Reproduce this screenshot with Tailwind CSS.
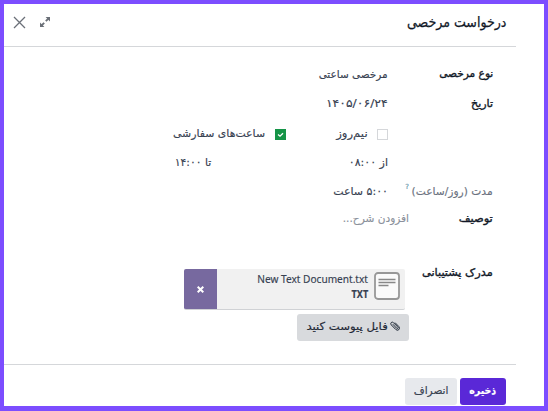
<!DOCTYPE html>
<html lang="fa" dir="rtl">
<head>
<meta charset="utf-8">
<title>درخواست مرخصی</title>
<script src="https://cdn.jsdelivr.net/npm/@tailwindcss/browser@4"></script>
</head>
<body class="font-['DejaVu_Sans',sans-serif] text-[11px] leading-none text-[#374151] [-webkit-text-stroke:0.15px_currentColor]">
<div class="w-[548px] h-[411px] border-4 border-b-[5px] border-[#7c4dff] bg-white flex flex-col overflow-hidden whitespace-nowrap">
  <header class="h-[43px] shrink-0 ms-7 border-b border-[#d5d7da] flex items-center justify-between ps-[10px] pe-[9px]">
    <h1 class="text-[14px] text-[#111827] -mt-[6px] [-webkit-text-stroke:0.25px_currentColor]"><span class="inline-block origin-right scale-x-[.9]">درخواست مرخصی</span></h1>
    <div class="flex items-center gap-[13px] -mt-[6px]">
      <svg class="size-[12px]" viewBox="0 0 12 12" fill="#6b7078" stroke="#6b7078"><path d="M6.6 1H11v4.4zM1 6.6V11h4.4z" stroke="none"/><path d="M9.5 2.5 6.8 5.2M5.2 6.8 2.5 9.5" stroke-width="1.8" fill="none"/></svg>
      <svg class="size-[13px]" viewBox="0 0 13 13" fill="none" stroke="#6b7078" stroke-width="1.3"><path d="M1 1l11 11M12 1 1 12"/></svg>
    </div>
  </header>
  <main class="pt-3 ps-[51px] h-[317px] shrink-0">
    <div class="h-[30px] flex items-center"><div class="w-[105px] -mt-[2px] text-[#111827] [-webkit-text-stroke:0.35px_currentColor]"><span class="inline-block origin-right scale-x-[.96]">نوع مرخصی</span></div><span class="inline-block origin-right scale-x-[.95]">مرخصی ساعتی</span></div>
    <div class="h-[29px] flex items-center"><div class="w-[105px] -mt-px text-[#111827] [-webkit-text-stroke:0.35px_currentColor]"><span class="inline-block">تاریخ</span></div><span dir="ltr" class="inline-block origin-right scale-x-[1.13]">۱۴۰۵/۰۶/۲۴</span></div>
    <div class="h-[30px] flex items-center ps-[105px]">
      <div class="w-[102px] flex items-center gap-[9px]"><i class="size-[11px] border border-[#d5d7da] mt-[2px]"></i><span class="inline-block origin-right scale-x-[1.06]">نیم‌روز</span></div>
      <div class="flex items-center gap-[10px]"><i class="size-[11px] bg-[#159447] mt-[2px]"><svg viewBox="0 0 11 11" fill="none" stroke="white" stroke-width="1.3"><path d="M3 5.5 5 7.2 8 4.2"/></svg></i><span class="inline-block origin-right scale-x-[.99]">ساعت‌های سفارشی</span></div>
    </div>
    <div class="h-[29px] flex items-center ps-[105px]"><div class="w-[177px]"><span class="inline-block">از ۰۸:۰۰</span></div><span class="inline-block origin-right scale-x-[.98]">تا ۱۴:۰۰</span></div>
    <div class="h-[29px] flex items-center"><div class="w-[105px] text-[#6b7280] flex items-start"><span class="w-[84px]"><span class="inline-block origin-right scale-x-[.97]">مدت (روز/ساعت)</span></span><sup class="text-[7px] leading-none top-0 -mt-[2px] text-[#5b93a8]">?</sup></div><span class="inline-block">۵:۰۰ ساعت</span></div>
    <div class="h-[26px] flex items-center"><div class="w-[84px] -mt-px text-[#111827] [-webkit-text-stroke:0.35px_currentColor]"><span class="inline-block origin-right scale-x-[1.04]">توصیف</span></div><span class="inline-block -mt-px origin-right scale-x-[.96] text-[#8b919b]">افزودن شرح...</span></div>
    <div class="mt-[37px] flex">
      <div class="w-[84px] -mt-[2px] text-[#111827] [-webkit-text-stroke:0.35px_currentColor]"><span class="inline-block origin-right scale-x-[1.03]">مدرک پشتیبانی</span></div>
      <div>
        <div class="w-[221px] h-[41px] ms-1 rounded-xs overflow-hidden border-b border-[#d0d2d5] bg-[#f1f1f1] flex">
          <svg class="w-[27px] h-[30px] ms-[4px] mt-[3px]" viewBox="0 0 27 30"><rect x="1" y="1" width="24" height="26" rx="3" fill="#fafafa" stroke="#979797" stroke-width="1.8"/><path d="M4.5 7.5h17M4.5 10.5h17M4.5 13.5h10" stroke="#888" stroke-width="1.3"/></svg>
          <div dir="ltr" class="w-[157px] text-right pe-[6px] pt-[4px] font-['Noto_Sans',sans-serif] text-[#374151]"><div class="text-[10.1px] leading-[12px]">New Text Document.txt</div><div class="text-[10px] leading-[12px] mt-[3px] font-bold"><span class="inline-block origin-right scale-x-[.92]">TXT</span></div></div>
          <div class="w-[33px] ms-auto bg-[#77699f] flex items-center justify-center"><svg class="size-[7px] ms-px" viewBox="0 0 7 7" stroke="white" stroke-width="2"><path d="M.7.7l5.6 5.6M6.3.7.7 6.3"/></svg></div>
        </div>
        <button class="mt-[4px] w-[112px] h-[27px] rounded-[3px] bg-[#d8dadd] text-[#1f2937] flex items-center ps-[9px] gap-[2px] [-webkit-text-stroke:0.2px_currentColor]">
          <svg class="size-[10px] -mt-[4px]" viewBox="0 0 10 10" fill="none" stroke="#1f2937" stroke-width="1"><path d="M2.8 3.2 6.6 7.2Q7.5 8 8 7.3T7.6 5.9L3.5 1.7Q2.3.6 1.3 1.5T1.2 3.8L5.7 8.4Q7.4 10 8.8 8.7T8.8 5.5L5 1.6"/></svg>
          <span class="inline-block -mt-[3px] origin-right scale-x-[1.06]">فایل پیوست کنید</span>
        </button>
      </div>
    </div>
  </main>
  <footer class="ms-7 border-t border-[#d5d7da] flex-1 ps-[10px] pt-[13px] flex gap-[3px]">
    <button class="w-[46px] h-[27px] rounded-[3px] bg-[#5a28d7] text-white font-bold pb-[3px]"><span class="inline-block scale-x-[.86]">ذخیره</span></button>
    <button class="w-[52px] h-[27px] rounded-[3px] bg-[#e7e9ed] pb-[3px]"><span class="inline-block scale-x-[.96]">انصراف</span></button>
  </footer>
</div>
</body>
</html>
